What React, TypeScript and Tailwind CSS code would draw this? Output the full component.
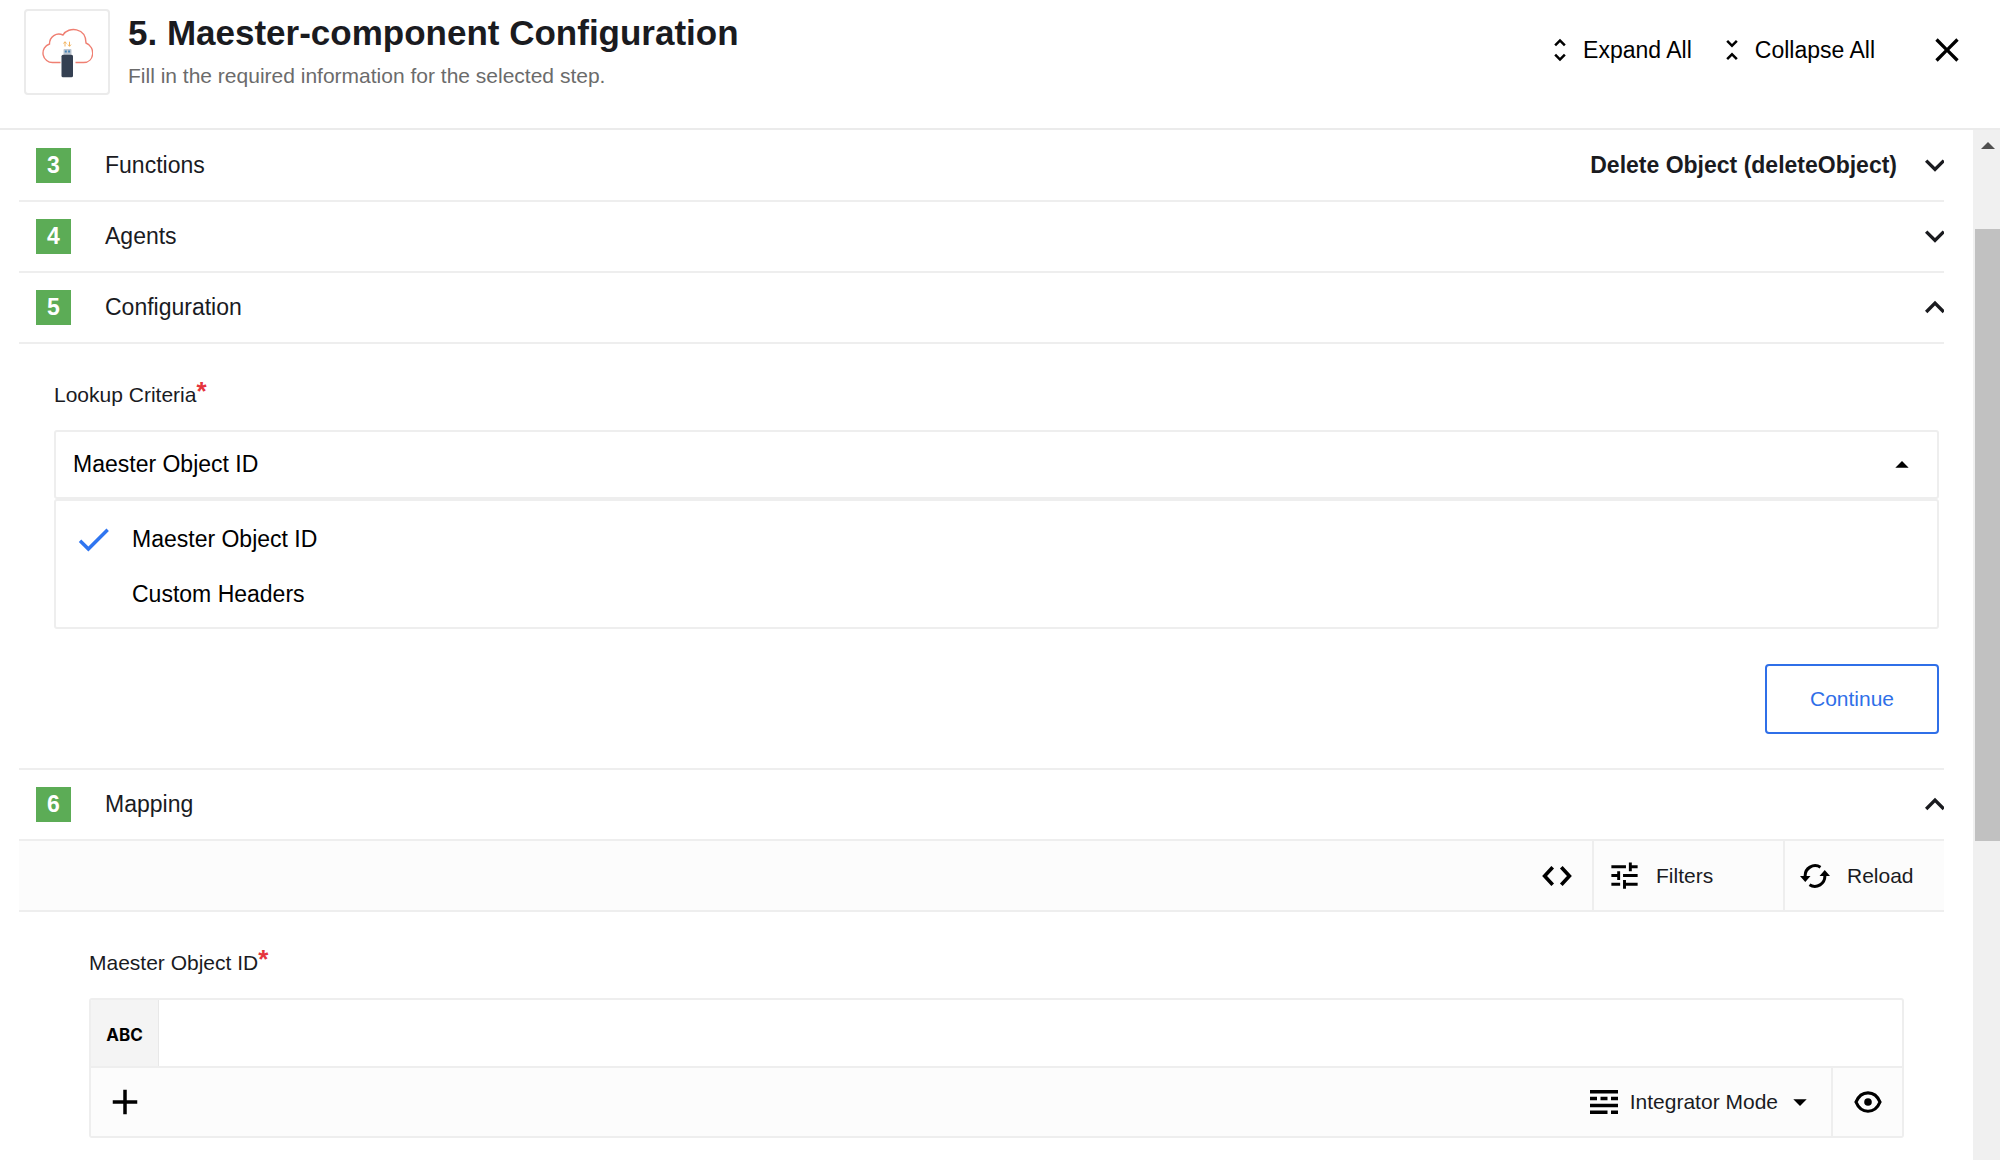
import type { ReactNode } from 'react';

const P = {
  down: 'M16.59 8.09 12 12.67 7.41 8.09 6 9.5l6 6 6-6z',
  up: 'M12 7.7l-6 6 1.41 1.41L12 10.53l4.59 4.58L18 13.7z',
  expand: 'M12 5.83 15.17 9l1.41-1.41L12 3 7.41 7.59 8.83 9 12 5.83zm0 12.34L8.83 15l-1.41 1.41L12 21l4.59-4.59L15.17 15 12 18.17z',
  collapse: 'M7.41 18.59 8.83 20 12 16.83 15.17 20l1.41-1.41L12 14l-4.59 4.59zm9.18-13.18L15.17 4 12 7.17 8.83 4 7.41 5.41 12 10l4.59-4.59z',
  close: 'M19 6.41 17.59 5 12 10.59 6.41 5 5 6.41 10.59 12 5 17.59 6.41 19 12 13.41 17.59 19 19 17.59 13.41 12z',
  caretUp: 'm7 14 5-5 5 5z',
  caretDown: 'm7 10 5 5 5-5z',
  check: 'M9 16.17 4.83 12l-1.42 1.41L9 19 21 7l-1.41-1.41z',
  tune: 'M3 17v2h6v-2H3zM3 5v2h10V5H3zm10 16v-2h8v-2h-8v-2h-2v6h2zM7 9v2H3v2h4v2h2V9H7zm14 4v-2H11v2h10zm-6-4h2V7h4V5h-4V3h-2v6z',
  add: 'M19 13h-6v6h-2v-6H5v-2h6V5h2v6h6v2z',
};

function Icon({ d, className }: { d: string; className: string }) {
  return (
    <svg viewBox="0 0 24 24" fill="currentColor" aria-hidden="true" className={`shrink-0 ${className}`}>
      <path d={d} />
    </svg>
  );
}

function Logo() {
  return (
    <div className="flex size-[86px] shrink-0 items-center justify-center rounded border-2 border-[#ebebeb]">
      <svg viewBox="-0.5 -0.5 52 52" className="size-[52px]" aria-hidden="true">
        <path
          d="M19 36H11.500A9.500 9.500 0 0 1 8 17.500C8 10 15 5.500 21.500 8.500C27 -0.500 44.500 1 44.500 16.500C54.500 20.500 53 36 42 36H34"
          fill="none"
          stroke="#ef7f72"
          strokeWidth="1.400"
        />
        <path d="M23.500 20v-4.500M22 17 23.500 15.200l1.500 1.800M28 15.200v4.500M26.500 18.100 28 19.800l1.500-1.700" fill="none" stroke="#f2b25c" strokeWidth="1" />
        <rect x="22" y="22.500" width="8" height="6" rx="1" fill="#bcc5cf" />
        <rect x="23.300" y="24" width="2" height="2" fill="#4583b5" />
        <rect x="26.600" y="24" width="2" height="2" fill="#4583b5" />
        <rect x="20" y="28.300" width="11.500" height="22.500" rx="1.500" fill="#354052" />
      </svg>
    </div>
  );
}

function Step({ n, title, value, open }: { n: number; title: string; value?: string; open?: boolean }) {
  return (
    <h2>
      <button
        type="button"
        aria-expanded={!!open}
        className="flex h-[71px] w-full items-center overflow-hidden border-b-2 border-[#eeeeee] pl-[17px] text-left text-[23px] text-[#1a1b1f]"
      >
        <span className="mr-[34px] flex size-[35px] shrink-0 items-center justify-center bg-[#5cac56] font-bold text-white">{n}</span>
        <span className="grow">{title}</span>
        <span className="mr-[18px] font-bold">{value}</span>
        <Icon d={open ? P.up : P.down} className="-mr-[11px] size-10" />
      </button>
    </h2>
  );
}

function FieldLabel({ id, htmlFor, children }: { id?: string; htmlFor: string; children: ReactNode }) {
  return (
    <label id={id} htmlFor={htmlFor} className="flex h-[28px] text-[21px] leading-[28px] text-[#1a1b1f]">
      {children}
      <span className="-mt-1 text-[26px] leading-[28px] font-bold text-[#e5343d]">*</span>
    </label>
  );
}

export default function App() {
  return (
    <div className="flex h-screen flex-col overflow-hidden bg-white font-['Liberation_Sans',Arial,sans-serif] text-black">
      <header className="flex h-[130px] shrink-0 border-b-2 border-[#ebebeb] pt-[9px] pr-[33px] pl-6">
        <Logo />
        <div className="ml-[18px] grow">
          <h1 className="text-[35px] leading-[48px] font-bold text-[#1a1b1f]">5. Maester-component Configuration</h1>
          <p className="mt-1 text-[21px] leading-[30px] text-[#6b6b6b]">Fill in the required information for the selected step.</p>
        </div>
        <div className="flex h-[82px] items-center text-[23px]">
          <button type="button" className="flex items-center gap-2">
            <Icon d={P.expand} className="size-[30px]" />
            Expand All
          </button>
          <button type="button" className="ml-[25px] flex items-center gap-2">
            <Icon d={P.collapse} className="size-[30px]" />
            Collapse All
          </button>
          <button type="button" aria-label="Close" className="ml-[52px]">
            <Icon d={P.close} className="size-10" />
          </button>
        </div>
      </header>

      <div className="flex min-h-0 grow">
        <main className="min-w-0 grow overflow-hidden pt-px pr-[29px] pl-[19px]">
          <Step n={3} title="Functions" value="Delete Object (deleteObject)" />
          <Step n={4} title="Agents" />
          <Step n={5} title="Configuration" open />

          <section className="border-b-2 border-[#eeeeee] pt-[37px] pr-[5px] pb-[34px] pl-[35px]">
            <FieldLabel id="criteria-label" htmlFor="criteria">Lookup Criteria</FieldLabel>
            <button
              id="criteria"
              type="button"
              aria-haspopup="listbox"
              aria-expanded="true"
              className="mt-[21px] flex h-[69px] w-full items-center justify-between rounded-[3px] border-2 border-[#eeeeee] pr-[19px] pl-[17px] text-[23px]"
            >
              Maester Object ID
              <Icon d={P.caretUp} className="size-8" />
            </button>
            <ul role="listbox" aria-labelledby="criteria-label" className="rounded-[3px] border-2 border-[#eeeeee] pt-[11px] pb-[5px] text-[23px]">
              <li role="option" aria-selected="true" className="flex h-[55px] items-center pl-[17px]">
                <Icon d={P.check} className="mr-[18px] size-[41px] text-[#2f75f0]" />
                Maester Object ID
              </li>
              <li role="option" aria-selected="false" className="flex h-[55px] items-center pl-[76px]">Custom Headers</li>
            </ul>
            <div className="mt-[35px] flex justify-end">
              <button type="button" className="h-[70px] w-[174px] rounded border-2 border-[#2f6fe8] text-[21px] text-[#2f6fe8]">Continue</button>
            </div>
          </section>

          <Step n={6} title="Mapping" open />
          <div className="flex h-[71px] justify-end border-b-2 border-[#eeeeee] bg-[#fcfcfc] text-[21px] text-[#1a1b1f]">
            <button type="button" aria-label="Show code" className="px-5 text-black">
              <svg viewBox="0 0 30 20" className="h-5 w-[30px]" fill="none" stroke="currentColor" strokeWidth="3.600" aria-hidden="true">
                <path d="M10.700 1.200 2.600 10l8.100 8.800M19.300 1.200 27.400 10l-8.100 8.800" />
              </svg>
            </button>
            <button type="button" className="flex w-[191px] items-center gap-[14px] border-l-2 border-[#eeeeee] pl-[13px]">
              <Icon d={P.tune} className="size-[35px] text-black" />
              Filters
            </button>
            <button type="button" className="flex w-[161px] items-center gap-[17px] border-l-2 border-[#eeeeee] pl-[15px]">
              <svg viewBox="0 0 30 24" className="h-6 w-[30px] text-black" fill="none" stroke="currentColor" strokeWidth="3" aria-hidden="true">
                <path d="M20.500 3.200A10 10 0 0 0 5.200 12.500M9.500 20.800A10 10 0 0 0 24.800 11.500" />
                <path d="M0 12h10.500l-5.250 6zM19.500 12h10.500l-5.250-6z" fill="currentColor" stroke="none" />
              </svg>
              Reload
            </button>
          </div>

          <section className="pt-[37px] pr-10 pl-[70px]">
            <FieldLabel htmlFor="object-id">Maester Object ID</FieldLabel>
            <div className="mt-[21px] overflow-hidden rounded-[3px] border-2 border-[#eeeeee]">
              <div className="flex h-[66px]">
                <span className="flex w-[68px] shrink-0 items-center justify-center border-r border-[#e8e8e8] bg-[#f4f4f4] pt-1.5 font-[Inter,sans-serif] text-[17px] font-bold">ABC</span>
                <input id="object-id" type="text" className="min-w-0 grow px-4 text-[23px] outline-none" />
              </div>
              <div className="flex h-[70px] items-center border-t-2 border-[#eeeeee] bg-[#fcfcfc] text-[21px]">
                <button type="button" aria-label="Add" className="ml-[13px]">
                  <Icon d={P.add} className="size-[42px]" />
                </button>
                <button type="button" className="ml-auto flex items-center text-[#1a1b1f]">
                  <svg viewBox="0 0 28 24" className="mr-3 h-6 w-7 text-black" fill="currentColor" aria-hidden="true">
                    <path d="M0 0h28v3.500H0zM0 6.800h7v3.500H0zM10.500 6.800h7v3.500h-7zM21 6.800h7v3.500h-7zM0 13.700h28v3.500H0zM0 20.500h17.500V24H0zM21 20.500h7V24h-7z" />
                  </svg>
                  Integrator Mode
                  <Icon d={P.caretDown} className="mr-[15px] ml-[6px] size-8 text-black" />
                </button>
                <button type="button" aria-label="Preview" className="flex h-full w-[71px] items-center justify-center border-l-2 border-[#eeeeee]">
                  <svg viewBox="0 0 28 22" className="h-[22px] w-7" aria-hidden="true">
                    <path d="M2 11C7 -1.300 21 -1.300 26 11C21 23.300 7 23.300 2 11z" fill="none" stroke="currentColor" strokeWidth="3.200" />
                    <circle cx="14" cy="11" r="3.800" fill="currentColor" />
                  </svg>
                </button>
              </div>
            </div>
          </section>
        </main>

        <div aria-hidden="true" className="flex w-[27px] shrink-0 flex-col bg-[#f0f0f0] pl-0.5">
          <svg viewBox="0 0 14 7" className="mt-3 ml-[6px] h-[7px] w-[14px]" fill="#505050">
            <path d="M0 7 7 0l7 7z" />
          </svg>
          <div className="mt-20 h-[612px] bg-[#c1c1c1]" />
        </div>
      </div>
    </div>
  );
}
